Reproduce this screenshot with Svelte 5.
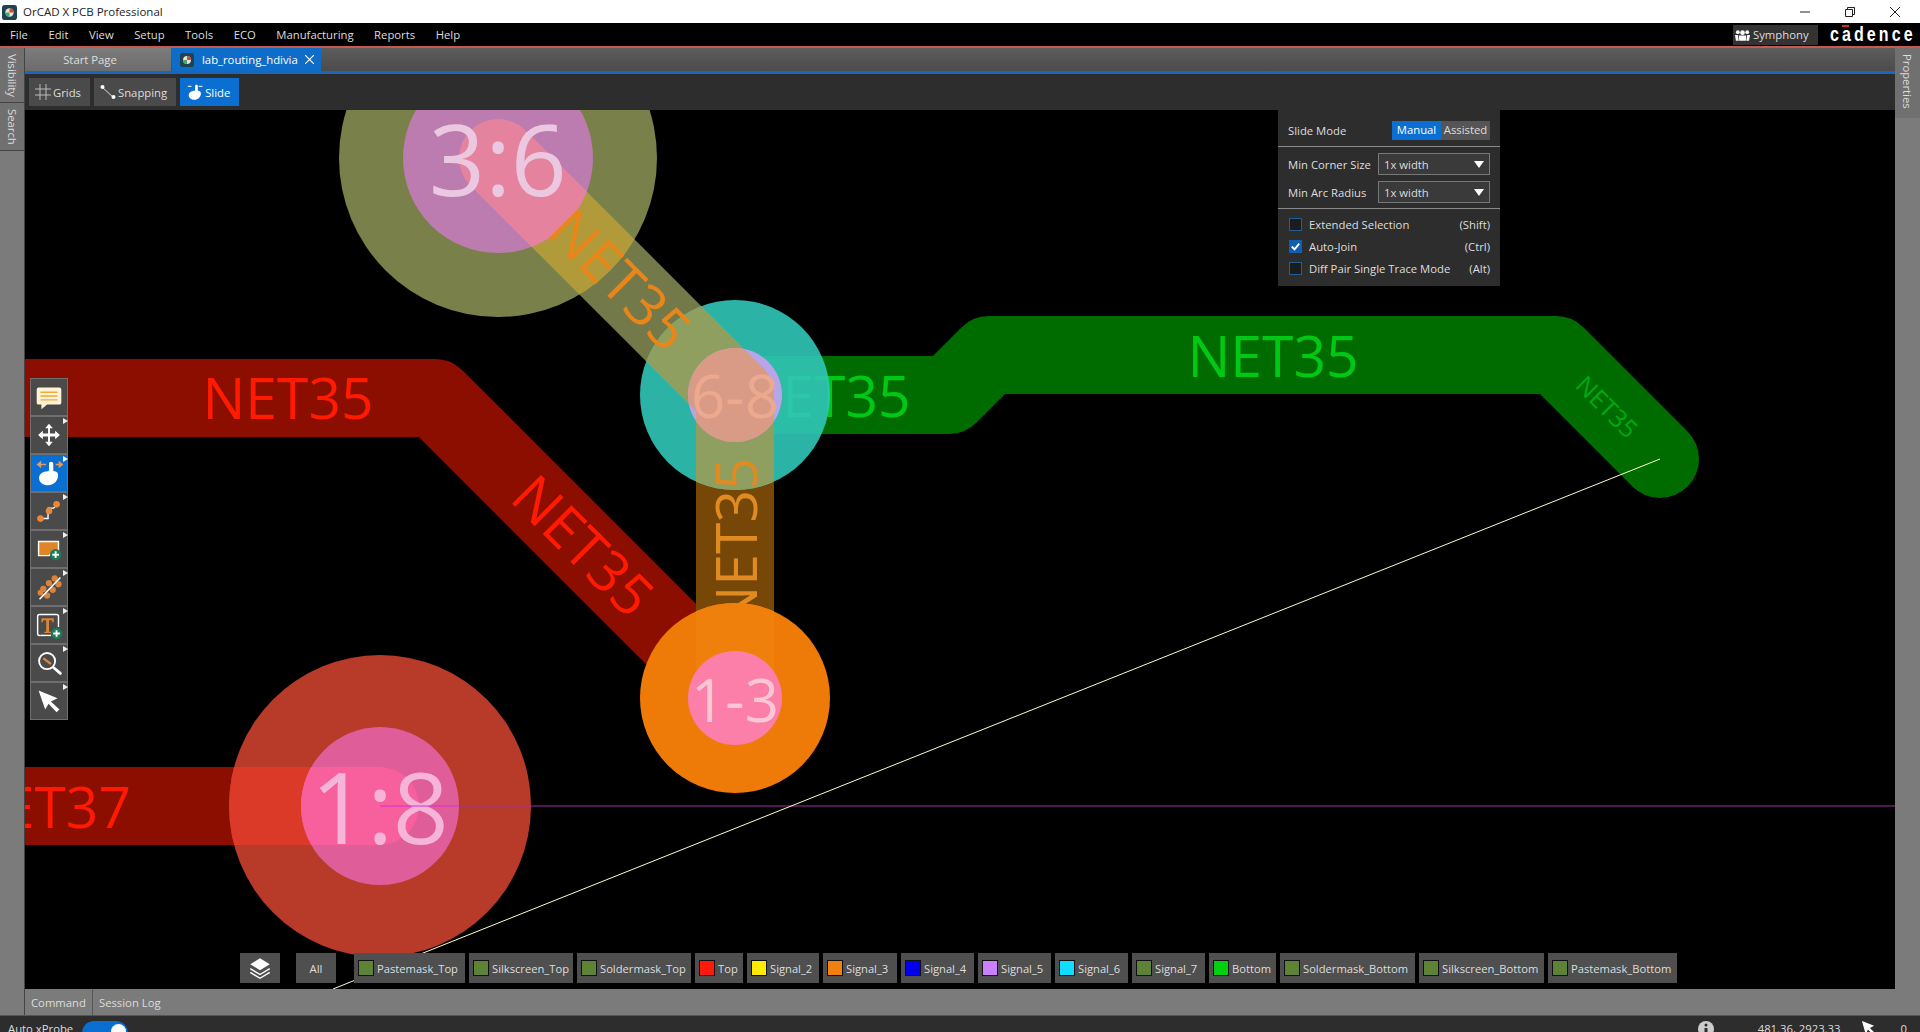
<script>
  const menu = ['File', 'Edit', 'View', 'Setup', 'Tools', 'ECO', 'Manufacturing', 'Reports', 'Help'];
  const green = '#5e8236';
  const layers = [
    { name: 'Pastemask_Top', color: green, w: 111 },
    { name: 'Silkscreen_Top', color: green, w: 104 },
    { name: 'Soldermask_Top', color: green, w: 114 },
    { name: 'Top', color: '#ff1a0a', w: 48 },
    { name: 'Signal_2', color: '#ffea00', w: 72 },
    { name: 'Signal_3', color: '#f08010', w: 74 },
    { name: 'Signal_4', color: '#0000ee', w: 73 },
    { name: 'Signal_5', color: '#cc80ff', w: 73 },
    { name: 'Signal_6', color: '#10ddff', w: 73 },
    { name: 'Signal_7', color: green, w: 73 },
    { name: 'Bottom', color: '#00d010', w: 67 },
    { name: 'Soldermask_Bottom', color: green, w: 135 },
    { name: 'Silkscreen_Bottom', color: green, w: 125 },
    { name: 'Pastemask_Bottom', color: green, w: 129 }
  ];
  const hand = '<path d="M19 9.500c0-3 4.500-3 4.500 0v7.500c4 .5 5.500 2 5 5.500-.5 5.500-5 9.500-10.500 9.500-5 0-9.500-3-9.500-7.500 0-4 3.500-6.500 7-7 1.500-.2 3.500-.5 3.500-1.500z" fill="#fff"/>';
  const tools = [
    { more: false, svg: '<path d="M8 9h22a2 2 0 0 1 2 2v14a2 2 0 0 1-2 2H17l-6 5v-5H8a2 2 0 0 1-2-2V11a2 2 0 0 1 2-2z" fill="#fff3d6"/><path d="M10 14h18M10 18h18M10 22h18" stroke="#eea93c" stroke-width="1.500"/>' },
    { more: true, svg: '<path d="M19 7l4 5h-3v5.500h5.500v-3l5 4.500-5 4.500v-3H20V26h3l-4 5-4-5h3v-5.500h-5.500v3l-5-4.500 5-4.500v3H18V12h-3z" fill="#fff"/>' },
    { more: true, active: true, svg: '<path d="M10 10h6M7 10l3-2.500v5zM26 10h4M33 10l-3-2.500v5z" fill="#e59a5a" stroke="#e59a5a" stroke-width="1.500"/>' + hand },
    { more: true, svg: '<path d="M11 27h7V16h6l3-4" fill="none" stroke="#fff" stroke-width="1.500"/><circle cx="10" cy="27" r="3.500" fill="#e8883a"/><circle cx="19" cy="19" r="3.500" fill="#e8883a"/><circle cx="27" cy="12" r="3.500" fill="#e8883a"/>' },
    { more: true, svg: '<path d="M8 11h21v11h-6l-4 4H8z" fill="#e08428" stroke="#fff" stroke-width="1.500"/><circle cx="26" cy="25" r="6" fill="#1f7a55"/><path d="M26 21.500v7M22.500 25h7" stroke="#fff" stroke-width="2"/>' },
    { more: true, svg: '<g fill="#d9843a"><circle cx="13" cy="21" r="3.300"/><circle cx="19" cy="15" r="3.300"/><circle cx="25" cy="10" r="3.300"/><circle cx="10" cy="25" r="3"/><circle cx="17" cy="28" r="3.300"/><circle cx="23" cy="22" r="3.300"/><circle cx="29" cy="16" r="3.300"/></g><path d="M9 32L31 9" stroke="#fff" stroke-width="1.600"/>' },
    { more: true, svg: '<path d="M10 30H9a2 2 0 0 1-2-2V10a2 2 0 0 1 2-2h18a2 2 0 0 1 2 2v11" fill="none" stroke="#fff" stroke-width="1.500"/><path d="M10 30h11" stroke="#fff" stroke-width="1.500"/><path d="M11 12h13v4h-1.500l-.5-2h-3v12h2v1.500h-7V26h2V14h-3l-.5 2H11z" fill="#d9843a"/><circle cx="27" cy="28" r="6" fill="#1f7a55"/><path d="M27 24.500v7M23.500 28h7" stroke="#fff" stroke-width="2"/>' },
    { more: true, svg: '<circle cx="17" cy="17" r="8.500" fill="none" stroke="#fff" stroke-width="2"/><path d="M24 24l7 6" stroke="#fff" stroke-width="3" stroke-linecap="round"/><path d="M13 14l8 6" stroke="#d9843a" stroke-width="2.500"/>' },
    { more: true, svg: '<path d="M8 8l20 8-7 3.500 9 8.500-3 3-8.500-9L15 28z" fill="#fff"/>' }
  ];
  const checks = [
    { label: 'Extended Selection', key: '(Shift)', on: false },
    { label: 'Auto-Join', key: '(Ctrl)', on: true },
    { label: 'Diff Pair Single Trace Mode', key: '(Alt)', on: false }
  ];
</script>

<div class="app">
  <div class="titlebar">
    <svg class="appicon" viewBox="0 0 16 16"><rect width="16" height="16" rx="3" fill="#1d4450"/><circle cx="8" cy="8" r="4.500" fill="#e8e4dc"/><path d="M8 3.500a4.500 4.500 0 0 1 4.500 4.500H8z" fill="#d8483a"/><path d="M3.500 8A4.500 4.500 0 0 0 8 12.500V8z" fill="#46a86a"/></svg>
    <span class="apptitle">OrCAD X PCB Professional</span>
    <div class="winbtns">
      <svg viewBox="0 0 10 10"><path d="M0 5h10" stroke="#222" fill="none"/></svg>
      <svg viewBox="0 0 10 10"><path d="M.5 2.500h7v7h-7zM2.500 2.500v-2h7v7h-2" stroke="#222" fill="none"/></svg>
      <svg viewBox="0 0 10 10"><path d="M0 0l10 10M10 0L0 10" stroke="#222" fill="none"/></svg>
    </div>
  </div>

  <div class="menubar">
    {#each menu as item}
      <span>{item}</span>
    {/each}
    <div class="symphony">
      <svg viewBox="0 0 16 12" width="15" height="12"><g fill="#fff"><circle cx="3" cy="3" r="2"/><circle cx="13" cy="3" r="2"/><circle cx="8" cy="3.500" r="2.500"/><path d="M0 6h3l1 6H1zM13 6h3l-1 6h-3z"/><path d="M4 6.500h8l-.5 5.500h-7z"/></g></svg>
      Symphony
    </div>
    <div class="cadence"><i></i><span>cadence</span></div>
  </div>

  <div class="middle">
    <div class="rail left">
      <div class="railtab">Visibility</div>
      <div class="railtab">Search</div>
    </div>

    <div class="center">
      <div class="tabs">
        <div class="tab">Start Page</div>
        <div class="tab active">
          <svg viewBox="0 0 16 16" width="14" height="14"><rect width="16" height="16" rx="3" fill="#1d4450"/><circle cx="8" cy="8" r="4.500" fill="#e8e4dc"/><path d="M8 3.500a4.500 4.500 0 0 1 4.500 4.500H8z" fill="#d8483a"/><path d="M3.500 8A4.500 4.500 0 0 0 8 12.500V8z" fill="#46a86a"/></svg>
          <span>lab_routing_hdivia</span>
          <svg viewBox="0 0 10 10" width="9" height="9"><path d="M0 0l10 10M10 0L0 10" stroke="#fff" fill="none" stroke-width="1.200"/></svg>
        </div>
      </div>

      <div class="toolbar">
        <button class="tb">
          <svg viewBox="0 0 16 16" width="16" height="16"><path d="M5 0v16M11 0v16M0 5h16M0 11h16" stroke="#bbb" fill="none"/></svg>
          Grids
        </button>
        <button class="tb">
          <svg viewBox="0 0 16 16" width="16" height="16"><path d="M2 3l12 11" stroke="#ddd"/><circle cx="2.500" cy="3" r="2" fill="#fff"/><circle cx="13.500" cy="13" r="2" fill="#fff"/></svg>
          Snapping
        </button>
        <button class="tb">
          <svg viewBox="4 6 28 28" width="17" height="17"><path d="M7 10h6M25 10h6" stroke="#ddd" stroke-width="2"/>{@html hand}</svg>
          Slide
        </button>
      </div>

      <div class="canvas">
        <svg class="board" viewBox="25 110 1870 879" width="1870" height="879">
          <defs>
            <clipPath id="o36"><circle cx="498" cy="158" r="159" /></clipPath>
            <clipPath id="i36"><circle cx="498" cy="158" r="95" /></clipPath>
            <clipPath id="o68"><circle cx="735" cy="395" r="95" /></clipPath>
            <clipPath id="i68"><circle cx="735" cy="395" r="47" /></clipPath>
            <clipPath id="o13"><circle cx="735" cy="698" r="95" /></clipPath>
            <clipPath id="o18"><circle cx="380" cy="806" r="151" /></clipPath>
            <clipPath id="i18"><circle cx="380" cy="806" r="79" /></clipPath>
          </defs>

          <!-- traces -->
          <path class="trace" d="M0 398H435L735 698" stroke="#8b0e00" />
          <path class="trace" d="M0 806H380" stroke="#8b0e00" />
          <path class="trace" d="M735 395H949L989 355H1556L1660 459" stroke="#006c00" />
          <path class="trace" d="M735 395V698" stroke="#774708" />
          <path class="trace" d="M498 158L735 395" stroke="#74794a" />

          <text class="net" x="288" y="419" fill="#ff1a00">NET35</text>
          <text class="net" x="131" y="828" style="text-anchor:end" fill="#ff1a00">NET37</text>
          <text class="net" transform="translate(583 546) rotate(45)" y="20" fill="#ff1a00">NET35</text>
          <text class="net" x="825" y="417" fill="#00c814">NET35</text>
          <text class="net" x="1273" y="377" fill="#00c814">NET35</text>
          <text class="net small" transform="translate(1607 407) rotate(45)" y="9" fill="#00a814">NET35</text>

          <!-- 3:6 -->
          <circle cx="498" cy="158" r="159" fill="#7a8049" />
          <g clip-path="url(#o36)"><path class="trace" d="M498 158L735 395" stroke="#b09a3a" /></g>
          <circle cx="498" cy="158" r="95" fill="#bc7cb0" />
          <g clip-path="url(#i36)"><path class="trace" d="M498 158L735 395" stroke="#e5839e" /></g>
          <text class="pad" x="498" y="196" fill="#ecc8e0">3:6</text>

          <!-- 6-8 -->
          <circle cx="735" cy="395" r="95" fill="#30c6b8" fill-opacity="0.9" />
          <g clip-path="url(#o68)">
            <path class="trace" d="M735 395V698" stroke="#8f9f5f" />
            <path class="trace" d="M498 158L735 395" stroke="#8f9f5f" />
          </g>
          <circle cx="735" cy="395" r="47" fill="#b8a5e8" />
          <g clip-path="url(#i68)">
            <path class="trace" d="M735 395V698" stroke="#d99a86" />
            <path class="trace" d="M498 158L735 395" stroke="#d99a86" />
          </g>
          <text class="pad mid" x="735" y="418" fill="#eca98f">6-8</text>

          <text class="net" transform="translate(620 280) rotate(45)" y="20" fill="#e8861a">NET35</text>
          <text class="net" transform="translate(735 543) rotate(-90)" y="22" fill="#e08a22">NET35</text>

          <!-- 1-3 -->
          <circle cx="735" cy="698" r="95" fill="#ee7a08" />
          <g clip-path="url(#o13)"><path class="trace" d="M735 395V698" stroke="#f0800c" /></g>
          <circle cx="735" cy="698" r="47" fill="#fb7fa8" />
          <text class="pad mid" x="735" y="722" fill="#fcc6d5">1-3</text>

          <!-- 1:8 -->
          <circle cx="380" cy="806" r="151" fill="#b83a28" />
          <g clip-path="url(#o18)"><path class="trace" d="M0 806H380" stroke="#dc3a28" /></g>
          <circle cx="380" cy="806" r="79" fill="#df5d98" />
          <g clip-path="url(#i18)"><path class="trace" d="M0 806H380" stroke="#f75f9d" /></g>
          <text class="pad" x="380" y="844" fill="#f6b5d8">1:8</text>

          <path d="M459 806H1895" stroke="#a030a0" stroke-width="1.200" fill="none" />
          <path d="M380 806H459" stroke="#d830c8" stroke-width="1.200" fill="none" />
          <path d="M1660 459L333 989" stroke="#fffbd0" fill="none" />
        </svg>

        <div class="palette">
          {#each tools as t}
            <div class="tool" class:active={t.active} class:more={t.more}>
              <svg viewBox="0 0 38 38" width="36" height="36">{@html t.svg}</svg>
            </div>
          {/each}
        </div>

        <div class="slidepanel">
          <div class="row mode">
            <span>Slide Mode</span>
            <div class="seg"><span class="on">Manual</span><span>Assisted</span></div>
          </div>
          <div class="group">
            <div class="row"><span>Min Corner Size</span><div class="select">1x width<i></i></div></div>
            <div class="row"><span>Min Arc Radius</span><div class="select">1x width<i></i></div></div>
          </div>
          <div class="group checks">
            {#each checks as c}
              <div class="check">
                <span class="box" class:on={c.on}>
                  {#if c.on}<svg viewBox="0 0 14 14" width="13" height="13"><path d="M3 7l3 3 5-6" stroke="#fff" stroke-width="2" fill="none"/></svg>{/if}
                </span>
                <span class="lbl">{c.label}</span>
                <span>{c.key}</span>
              </div>
            {/each}
          </div>
        </div>

        <div class="layerbar">
          <button class="lb stack">
            <svg viewBox="0 0 24 24" width="26" height="26"><path d="M12 3l9 5.500-9 5.500-9-5.500z" fill="#fff"/><path d="M3 12.500l9 5.500 9-5.500M3 16l9 5.500 9-5.500" stroke="#fff" stroke-width="1.300" fill="none"/></svg>
          </button>
          <button class="lb all">All</button>
          <div class="layers">
            {#each layers as l}
              <div class="layer" style="width:{l.w}px">
                <span class="swatch" style="background:{l.color}"></span>
                {l.name}
              </div>
            {/each}
          </div>
        </div>
      </div>

      <div class="bottomtabs">
        <span>Command</span>
        <span>Session Log</span>
      </div>
    </div>

    <div class="rail right">
      <div class="railtab">Properties</div>
    </div>
  </div>

  <div class="status">
    <span class="probe">Auto xProbe</span>
    <span class="toggle"><i></i></span>
    <svg class="info" viewBox="0 0 16 16" width="16" height="16"><circle cx="8" cy="8" r="8" fill="#ccc"/><circle cx="8" cy="4" r="1.500" fill="#2d2d2d"/><path d="M6.500 7h3v7h-3z" fill="#2d2d2d"/></svg>
    <span class="coords">481.36, 2923.33</span>
    <svg class="cur" viewBox="0 0 16 16" width="15" height="15"><path d="M1 0l13 5-4.500 2.500L15 13l-2 2-5.500-6L5 14z" fill="#fff"/></svg>
    <span class="count">0</span>
  </div>
</div>

<style>
  :global(body) {
    margin: 0;
    background: #000;
  }
  .app {
    width: 1920px;
    height: 1032px;
    display: flex;
    flex-direction: column;
    overflow: hidden;
    font-family: "Open Sans", "Noto Sans", sans-serif;
    font-size: 11.300px;
    color: #ddd;
  }
  .titlebar {
    height: 23px;
    flex: none;
    background: #fff;
    color: #222;
    display: flex;
    align-items: center;
    font-size: 11.500px;
  }
  .appicon {
    width: 15px;
    height: 15px;
    margin: 1px 6px 0 2px;
  }
  .winbtns {
    margin-left: auto;
    display: flex;
    gap: 35px;
    margin-right: 20px;
  }
  .winbtns svg {
    width: 10px;
    height: 10px;
  }
  .menubar {
    height: 23px;
    flex: none;
    background: #000;
    border-bottom: 2px solid #c8594f;
    display: flex;
    align-items: center;
    gap: 20.500px;
    padding-left: 10px;
  }
  .symphony {
    margin-left: auto;
    height: 20px;
    width: 85px;
    box-sizing: border-box;
    padding-left: 2px;
    background: #333;
    display: flex;
    align-items: center;
    gap: 3px;
  }
  .cadence {
    position: relative;
    width: 90px;
    height: 23px;
    margin-left: -8.500px;
    font-family: "Liberation Sans", sans-serif;
    font-weight: 700;
    font-size: 16px;
    letter-spacing: 3.100px;
    color: #fff;
    line-height: 23px;
    overflow: hidden;
  }
  .cadence span {
    display: block;
    transform: scaleY(1.300);
    transform-origin: 50% 60%;
  }
  .cadence i {
    position: absolute;
    left: 12px;
    top: 2px;
    width: 7px;
    height: 2px;
    background: #c8322a;
  }
  .middle {
    flex: 1;
    display: flex;
    min-height: 0;
  }
  .rail {
    width: 25px;
    flex: none;
    background: #7b7b7b;
    box-sizing: border-box;
  }
  .rail.left {
    border-right: 1px solid #444;
  }
  .railtab {
    writing-mode: vertical-rl;
    width: 100%;
    box-sizing: border-box;
    padding: 6px 0 5px;
    text-align: left;
    display: flex;
    align-items: center;
    background: #707070;
    border-bottom: 1px solid #444;
  }
  .rail.right .railtab {
    height: 70px;
    border: 0;
  }
  .center {
    flex: 1;
    min-width: 0;
    display: flex;
    flex-direction: column;
  }
  .tabs {
    height: 23px;
    flex: none;
    display: flex;
    background: linear-gradient(#5c5c5c, #4c4c4c);
    border-bottom: 3px solid #1a66b8;
    gap: 1px;
  }
  .tab {
    width: 146px;
    display: flex;
    align-items: center;
    justify-content: center;
    background: linear-gradient(#7c7c7c, #6c6c6c);
    padding-right: 16px;
    box-sizing: border-box;
  }
  .tab.active {
    width: 149px;
    background: #0e6dc8;
    color: #fff;
    padding: 0 0 0 8px;
    justify-content: flex-start;
  }
  .tab.active span {
    margin: 0 7px 0 8px;
  }
  .toolbar {
    height: 36px;
    flex: none;
    background: #2d2d2d;
    display: flex;
    align-items: center;
    gap: 4px;
    padding-left: 4px;
    box-sizing: border-box;
  }
  .tb {
    height: 28px;
    border: 0;
    padding: 0 9px 0 6px;
    background: #4a4a4a;
    color: #ddd;
    font: inherit;
    display: flex;
    align-items: center;
    gap: 2px;
  }
  .tb:last-child {
    background: #0a6fd0;
    color: #fff;
  }
  .canvas {
    flex: 1;
    position: relative;
    overflow: hidden;
    background: #000;
  }
  .board {
    display: block;
  }
  .trace {
    fill: none;
    stroke-width: 78;
    stroke-linecap: round;
    stroke-linejoin: round;
  }
  .net {
    font-size: 57px;
    text-anchor: middle;
  }
  .small {
    font-size: 25px;
  }
  .pad {
    font-size: 98px;
    text-anchor: middle;
  }
  .mid {
    font-size: 60px;
  }
  .palette {
    position: absolute;
    left: 5px;
    top: 268px;
    width: 38px;
    display: flex;
    flex-direction: column;
  }
  .tool {
    height: 38px;
    box-sizing: border-box;
    background: #4a4a4a;
    border: 1px solid #6e6e6e;
    position: relative;
  }
  .tool svg {
    display: block;
  }
  .tool.active {
    background: #0a6fd0;
  }
  .tool.more::after {
    content: "";
    position: absolute;
    right: -1px;
    top: 1px;
    border-left: 5px solid #eee;
    border-top: 3px solid transparent;
    border-bottom: 3px solid transparent;
  }
  .slidepanel {
    position: absolute;
    left: 1253px;
    top: 0;
    width: 222px;
    height: 176px;
    background: #2d2d2d;
    box-sizing: border-box;
  }
  .row {
    display: flex;
    align-items: center;
    justify-content: space-between;
    padding: 0 10px;
    height: 28px;
  }
  .row.mode {
    height: 36px;
    padding-top: 4px;
    box-sizing: border-box;
  }
  .seg {
    display: flex;
    height: 19px;
    line-height: 18px;
    text-align: center;
  }
  .seg span {
    width: 49px;
    background: #555;
  }
  .seg .on {
    background: #0a6fd0;
    color: #fff;
  }
  .group {
    border-top: 1px solid #8a8a8a;
    height: 62px;
    padding-top: 3px;
    box-sizing: border-box;
  }
  .select {
    width: 112px;
    height: 22px;
    box-sizing: border-box;
    border: 1px solid #777;
    background: #3a3a3a;
    display: flex;
    align-items: center;
    justify-content: space-between;
    padding: 0 5px;
  }
  .select i {
    border-top: 7px solid #fff;
    border-left: 5px solid transparent;
    border-right: 5px solid transparent;
  }
  .group.checks {
    height: auto;
    padding-top: 4px;
  }
  .check {
    display: flex;
    align-items: center;
    height: 22px;
    padding: 0 10px 0 11px;
  }
  .lbl {
    margin-left: 7px;
    flex: 1;
  }
  .box {
    width: 13px;
    height: 13px;
    box-sizing: border-box;
    border: 1px solid #1f5f9e;
    background: #1c1c1c;
    display: block;
  }
  .box.on {
    background: #0e5fb0;
    border: 0;
  }
  .box svg {
    display: block;
  }
  .layerbar {
    position: absolute;
    left: 215px;
    bottom: 6px;
    height: 30px;
    display: flex;
    color: #ddd;
  }
  .lb {
    width: 40px;
    height: 30px;
    border: 0;
    padding: 0;
    background: #4f4f4f;
    color: #ddd;
    font: inherit;
    display: flex;
    align-items: center;
    justify-content: center;
  }
  .all {
    margin: 0 18px 0 16px;
  }
  .layers {
    display: flex;
    gap: 4px;
  }
  .layer {
    background: #4f4f4f;
    display: flex;
    align-items: center;
    gap: 3px;
    padding-left: 4px;
    box-sizing: border-box;
    white-space: nowrap;
    overflow: hidden;
    font-size: 11.200px;
  }
  .swatch {
    width: 16px;
    height: 16px;
    flex: none;
    box-sizing: border-box;
    border: 1px solid #111;
  }
  .bottomtabs {
    height: 26px;
    flex: none;
    background: #7b7b7b;
    display: flex;
    align-items: center;
  }
  .bottomtabs span {
    height: 100%;
    display: flex;
    align-items: center;
    padding: 0 6px;
    border-right: 1px solid #555;
  }
  .bottomtabs span:last-child {
    border: 0;
  }
  .status {
    height: 17px;
    flex: none;
    background: #2d2d2d;
    border-top: 1px solid #555;
    box-sizing: border-box;
    position: relative;
    display: flex;
    padding: 5px 0 0 8px;
    line-height: 15px;
    overflow: hidden;
  }
  .toggle {
    width: 46px;
    height: 24px;
    margin-left: 9px;
    border-radius: 12px;
    background: #0a6fd0;
    position: relative;
    flex: none;
  }
  .toggle i {
    position: absolute;
    right: 2px;
    top: 3px;
    width: 15px;
    height: 15px;
    border-radius: 50%;
    background: #fff;
  }
  .info {
    margin-left: auto;
    flex: none;
  }
  .coords {
    margin-left: 44px;
  }
  .cur {
    margin-left: 20px;
    flex: none;
  }
  .count {
    margin: 0 13px 0 25px;
  }
</style>
